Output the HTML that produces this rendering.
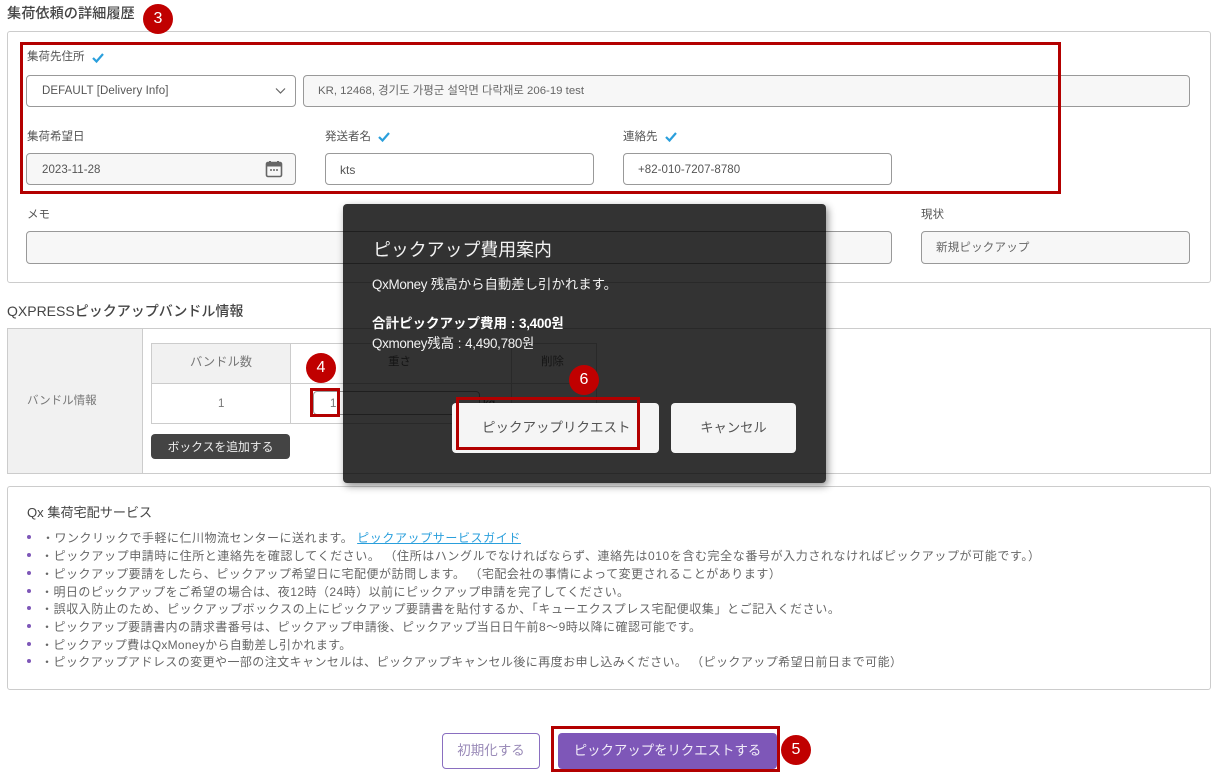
<!DOCTYPE html>
<html lang="ja"><head><meta charset="utf-8"><title>集荷依頼の詳細履歴</title>
<style>
html,body{margin:0;padding:0;background:#fff}
#p{position:relative;width:1216px;height:777px;overflow:hidden;background:#fff;font-family:"Liberation Sans","Noto Sans CJK JP",sans-serif;color:#555}
#p div,#p a,#p svg{position:absolute;box-sizing:border-box}
.t{white-space:nowrap;line-height:16px;height:16px}
.h{color:#444;font-weight:500}
.l{font-size:11.5px;color:#555}
.i{border:1px solid #999;border-radius:4px;background:#fff}
.g{background:#f7f7f7}
.v{font-size:11.5px;color:#555;letter-spacing:.05px}
.box{border:3px solid #b30000}
.b{width:30px;height:30px;border-radius:50%;background:#c00000;color:#fff;font-size:16px;line-height:30px;text-align:center}
.panel{border:1px solid #ccc;border-radius:3px}
.li{font-size:12px;letter-spacing:.6px;color:#666;left:41px}
.dot{width:4px;height:4px;border-radius:50%;background:#7e57b8;left:27px}
.tb{background:#ccc}
.n{letter-spacing:-.3px}
</style></head><body><div id="p">
<div class="t h" style="left:7px;top:6px;font-size:14.2px">集荷依頼の詳細履歴</div>
<div class="panel" style="left:7px;top:31px;width:1204px;height:252px"></div>

<div class="t l" style="left:27px;top:49px">集荷先住所</div>
<svg style="left:91px;top:52px" width="14" height="12" viewBox="0 0 14 12"><path d="M2 6l3.5 3.5L12 2" fill="none" stroke="#2a9fdc" stroke-width="2.2"/></svg>
<div class="i" style="left:26px;top:75px;width:270px;height:32px"></div>
<div class="t v" style="left:42px;top:83px;letter-spacing:.1px">DEFAULT [Delivery Info]</div>
<svg style="left:275px;top:87px" width="11" height="8" viewBox="0 0 11 8"><path d="M1 1.5l4.5 4.5L10 1.5" fill="none" stroke="#666" stroke-width="1.2"/></svg>
<div class="i g" style="left:303px;top:75px;width:887px;height:32px"></div>
<div class="t v" style="left:318px;top:83px;font-size:11.4px;color:#666;letter-spacing:0">KR, 12468, 경기도 가평군 설악면 다락재로 206-19 test</div>

<div class="t l" style="left:27px;top:129px">集荷希望日</div>
<div class="i g" style="left:26px;top:153px;width:270px;height:32px"></div>
<div class="t v" style="left:42px;top:162px">2023-11-28</div>
<svg style="left:265px;top:160px" width="18" height="18" viewBox="0 0 18 18"><path d="M5 1v3M13 1v3" stroke="#666" stroke-width="2"/><rect x="1.5" y="2.5" width="15" height="14" rx="1.5" fill="none" stroke="#666" stroke-width="1.6"/><rect x="1.5" y="2.5" width="15" height="4" fill="#666"/><path d="M5 10h2M8 10h2M11 10h2" stroke="#666" stroke-width="1.6"/></svg>

<div class="t l" style="left:325px;top:129px">発送者名</div>
<svg style="left:377px;top:131px" width="14" height="12" viewBox="0 0 14 12"><path d="M2 6l3.5 3.5L12 2" fill="none" stroke="#2a9fdc" stroke-width="2.2"/></svg>
<div class="i" style="left:325px;top:153px;width:269px;height:32px"></div>
<div class="t v" style="left:340px;top:162px;font-size:12px">kts</div>

<div class="t l" style="left:623px;top:129px">連絡先</div>
<svg style="left:664px;top:131px" width="14" height="12" viewBox="0 0 14 12"><path d="M2 6l3.5 3.5L12 2" fill="none" stroke="#2a9fdc" stroke-width="2.2"/></svg>
<div class="i" style="left:623px;top:153px;width:269px;height:32px"></div>
<div class="t v" style="left:638px;top:162px">+82-010-7207-8780</div>

<div class="box" style="left:20px;top:42px;width:1041px;height:152px"></div>

<div class="t l" style="left:27px;top:207px">メモ</div>
<div class="i g" style="left:26px;top:231px;width:866px;height:33px"></div>
<div class="t l" style="left:921px;top:207px">現状</div>
<div class="i g" style="left:921px;top:231px;width:269px;height:33px"></div>
<div class="t v" style="left:936px;top:240px;letter-spacing:.2px;color:#666">新規ピックアップ</div>

<div class="t h" style="left:7px;top:303px;font-size:14px">QXPRESSピックアップバンドル情報</div>
<div style="left:7px;top:328px;width:1204px;height:146px;border:1px solid #ccc"></div>
<div style="left:8px;top:329px;width:135px;height:144px;background:#f1f1f1;border-right:1px solid #ccc"></div>
<div class="t l" style="left:27px;top:393px;color:#777">バンドル情報</div>
<div style="left:151px;top:343px;width:446px;height:81px;border:1px solid #ccc"></div>
<div style="left:152px;top:344px;width:139px;height:39px;background:#f1f1f1"></div>
<div class="tb" style="left:152px;top:383px;width:444px;height:1px"></div>
<div class="tb" style="left:290px;top:344px;width:1px;height:79px"></div>
<div class="tb" style="left:511px;top:344px;width:1px;height:79px"></div>
<div class="t l" style="left:190px;top:354px;color:#777;font-size:12.3px">バンドル数</div>
<div class="t l" style="left:388px;top:354px;color:#666">重さ</div>
<div class="t l" style="left:541px;top:354px;color:#666">削除</div>
<div class="t l" style="left:218px;top:396px;color:#777">1</div>
<div class="i" style="left:313px;top:391px;width:167px;height:24px"></div>
<div class="t l" style="left:330px;top:396px;color:#777">1</div>
<div class="t l" style="left:483px;top:396px">kg</div>
<div style="left:151px;top:434px;width:139px;height:25px;background:#444;border-radius:4px"></div>
<div class="t" style="left:151px;top:439px;width:139px;text-align:center;font-size:11.8px;color:#eee">ボックスを追加する</div>

<div class="panel" style="left:7px;top:486px;width:1204px;height:204px"></div>
<div class="t" style="left:27px;top:505px;font-size:13.1px;color:#444">Qx 集荷宅配サービス</div>
<div class="dot" style="top:535px"></div><div class="t li" style="top:530px;left:42px;letter-spacing:.5px">・ワンクリックで手軽に仁川物流センターに送れます。 <a style="position:static;color:#2a9fdc;text-decoration:underline;letter-spacing:.6px">ピックアップサービスガイド</a></div>
<div class="dot" style="top:553px"></div><div class="t li" style="top:548px">・ピックアップ申請時に住所と連絡先を確認してください。 （住所はハングルでなければならず、連絡先は010を含む完全な番号が入力されなければピックアップが可能です。）</div>
<div class="dot" style="top:571px"></div><div class="t li" style="top:566px;letter-spacing:.52px">・ピックアップ要請をしたら、ピックアップ希望日に宅配便が訪問します。 （宅配会社の事情によって変更されることがあります）</div>
<div class="dot" style="top:589px"></div><div class="t li" style="top:584px;letter-spacing:.46px">・明日のピックアップをご希望の場合は、夜12時（24時）以前にピックアップ申請を完了してください。</div>
<div class="dot" style="top:606px"></div><div class="t li" style="top:601px">・誤収入防止のため、ピックアップボックスの上にピックアップ要請書を貼付するか、「キューエクスプレス宅配便収集」とご記入ください。</div>
<div class="dot" style="top:624px"></div><div class="t li" style="top:619px;letter-spacing:.45px">・ピックアップ要請書内の請求書番号は、ピックアップ申請後、ピックアップ当日日午前8〜9時以降に確認可能です。</div>
<div class="dot" style="top:642px"></div><div class="t li" style="top:637px;letter-spacing:.3px">・ピックアップ費はQxMoneyから自動差し引かれます。</div>
<div class="dot" style="top:659px"></div><div class="t li" style="top:654px;letter-spacing:.43px">・ピックアップアドレスの変更や一部の注文キャンセルは、ピックアップキャンセル後に再度お申し込みください。 （ピックアップ希望日前日まで可能）</div>

<div style="left:442px;top:733px;width:98px;height:36px;border:1px solid #8a6fc0;border-radius:4px;background:#fff"></div>
<div class="t" style="left:442px;top:743px;width:98px;text-align:center;font-size:13.5px;color:#9a8bb8">初期化する</div>
<div style="left:558px;top:733px;width:219px;height:36px;background:#7e57b8;border-radius:4px"></div>
<div class="t" style="left:558px;top:743px;width:219px;text-align:center;font-size:13.4px;color:#f1ecf8">ピックアップをリクエストする</div>
<div class="box" style="left:551px;top:726px;width:229px;height:46px"></div>
<div class="b" style="left:781px;top:735px">5</div>
<div class="b" style="left:143px;top:4px">3</div>

<div style="left:343px;top:204px;width:483px;height:279px;background:rgba(0,0,0,.8);border-radius:4px;box-shadow:2px 3px 8px rgba(0,0,0,.45)"></div>
<div class="t" style="left:373px;top:242px;font-size:17.9px;color:#f2f2f2">ピックアップ費用案内</div>
<div class="t" style="left:372px;top:277px;font-size:13.4px;color:#f2f2f2"><span class="n">QxMoney</span> 残高から自動差し引かれます。</div>
<div class="t" style="left:372px;top:316px;font-size:13.5px;color:#fff;font-weight:bold">合計ピックアップ費用 : <span class="n">3,400</span>원</div>
<div class="t" style="left:372px;top:336px;font-size:13.4px;color:#f2f2f2"><span class="n">Qxmoney</span>残高 : <span class="n">4,490,780</span>원</div>
<div style="left:452px;top:403px;width:207px;height:50px;background:#f5f5f5;border-radius:4px"></div>
<div class="t" style="left:482px;top:420px;font-size:13.5px;color:#555">ピックアップリクエスト</div>
<div style="left:671px;top:403px;width:125px;height:50px;background:#f5f5f5;border-radius:4px"></div>
<div class="t" style="left:671px;top:420px;width:125px;text-align:center;font-size:13.3px;color:#555">キャンセル</div>
<div class="box" style="left:456px;top:397px;width:184px;height:53px"></div>
<div class="b" style="left:569px;top:365px">6</div>
<div class="box" style="left:310px;top:388px;width:30px;height:29px"></div>
<div class="b" style="left:306px;top:353px">4</div>
</div></body></html>
